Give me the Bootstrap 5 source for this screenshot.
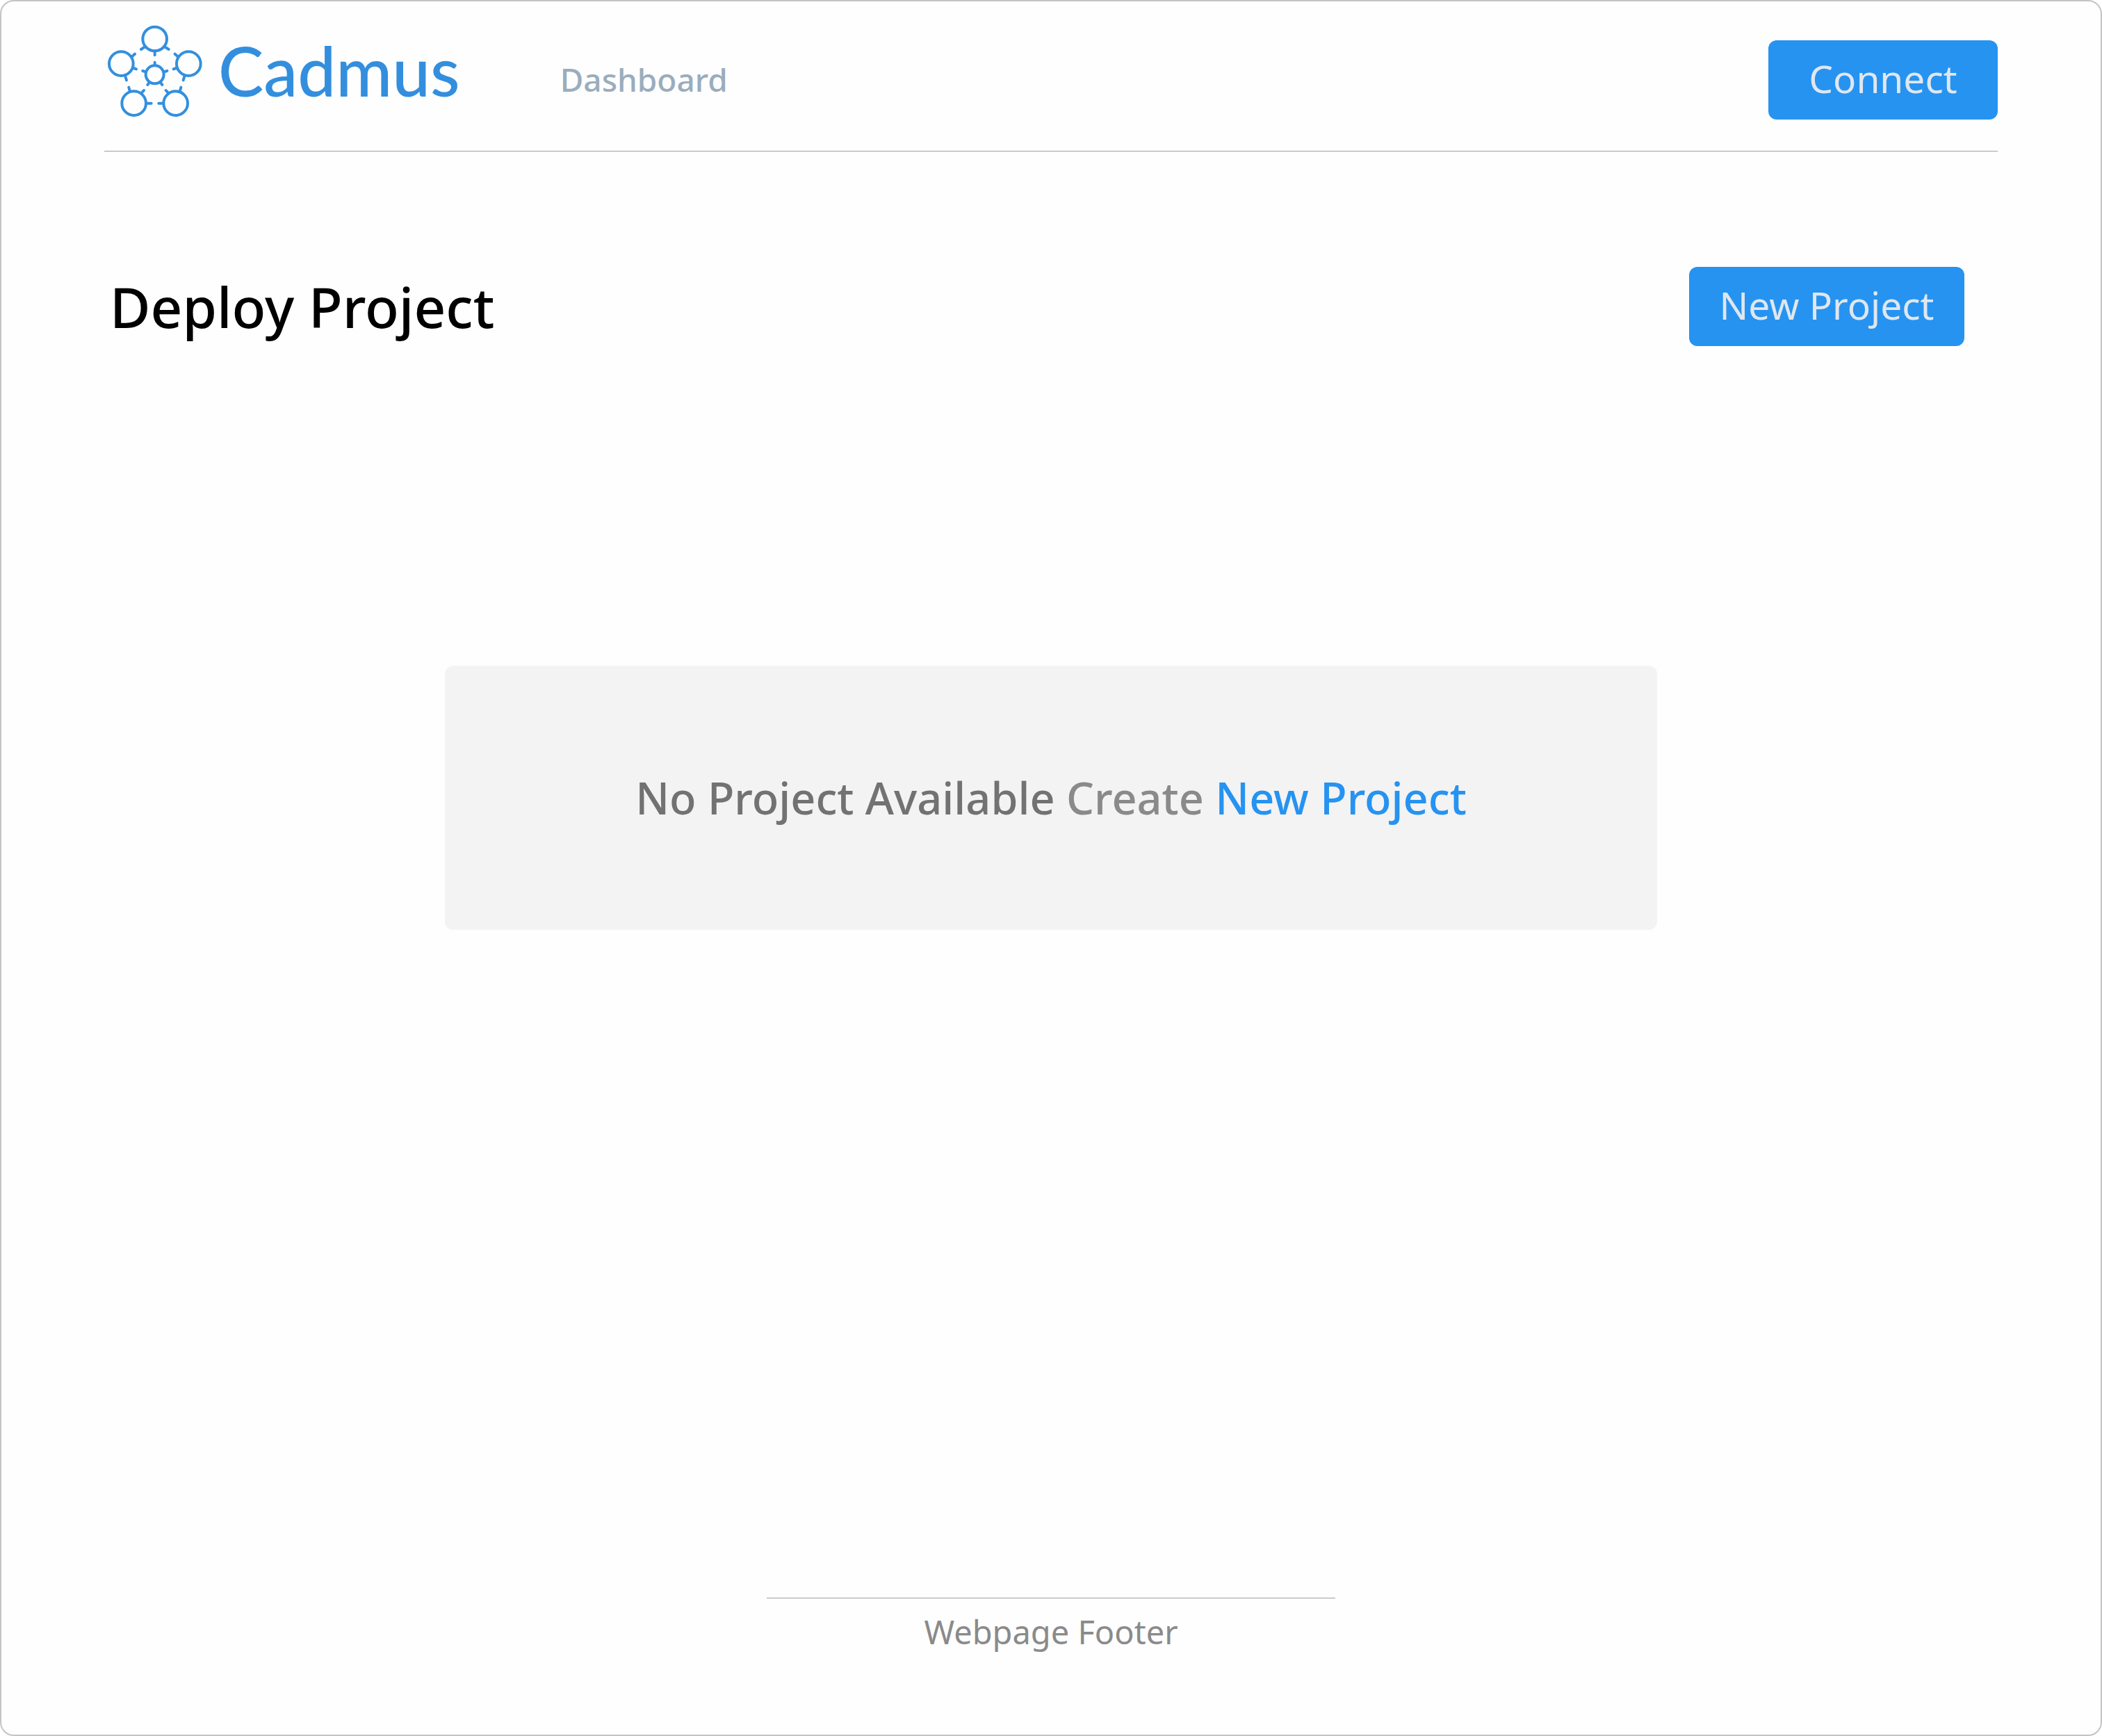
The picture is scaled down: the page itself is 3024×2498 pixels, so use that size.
<!DOCTYPE html>
<html lang="en">
<head>
<meta charset="utf-8">
<meta name="viewport" content="width=device-width, initial-scale=1">
<title>Cadmus – Deploy Project</title>
<link href="https://cdn.jsdelivr.net/npm/bootstrap@5.3.0/dist/css/bootstrap.min.css" rel="stylesheet">
<style>
  body { font-family: "Noto Sans", "Open Sans", sans-serif; background: #fff; }
  .app-frame { background: #fefefe; border: 2px solid #c4c4c4; border-radius: 20px; padding: 0 148px; }
  .app-header { height: 216px; padding: 28px 0 0; border-bottom: 1px solid #9f9f9f; }
  .brand-mark { width: 142px; height: 142px; }
  .brand-link { gap: 22px; height: 142px; color: #338fde; text-decoration: none; }
  .brand-name { font: 500 98px/112px Lato, sans-serif; }
  .main-link { font-size: 46px; line-height: 60px; font-weight: 500; color: #9aadbd; padding: 0; }
  .main-nav { margin: 54px 0 0 144px; }
  .btn-app { --bs-btn-color: #dfe7ee; --bs-btn-bg: #2693f1; --bs-btn-border-color: #2693f1;
    --bs-btn-hover-color: #fff; --bs-btn-hover-bg: #1c83dc; --bs-btn-hover-border-color: #1c83dc;
    --bs-btn-font-size: 55px; --bs-btn-line-height: 72px; --bs-btn-border-radius: 12px; --bs-btn-border-width: 0;
    height: 114px; padding: 0 0 4px; }
  .btn-connect { width: 330px; margin-top: 28px; }
  .btn-new { width: 396px; }
  .title-row { margin-top: 166px; padding: 0 48px 0 8px; }
  .title-row h1 { font-size: 80px; line-height: 112px; font-weight: 500; color: #000; }
  .empty-state { width: 64%; min-height: 380px; margin-top: 460px; border: 0; border-radius: 12px; background: #f3f3f3; }
  .empty-state p { font-size: 63px; line-height: 84px; font-weight: 500; color: #727272; }
  .empty-state span { color: #8a8a8a; }
  .empty-state a { color: #2693f1; text-decoration: none; }
  .app-footer { width: 30%; border-top: 1px solid #9f9f9f; padding: 16px 0 116px; font-size: 47px; line-height: 64px; color: #8a8a8a; }
</style>
</head>
<body>
<div class="app-frame min-vh-100 d-flex flex-column">
  <header class="app-header d-flex align-items-start">
    <a class="brand-link d-flex align-items-center" href="#">
      <svg class="brand-mark" viewBox="30 30 426 426" fill="none" stroke="#338fde" stroke-width="12" stroke-linecap="round" aria-hidden="true">
        <circle cx="248" cy="108" r="52"/><circle cx="103" cy="215" r="52"/><circle cx="394" cy="215" r="52"/>
        <circle cx="158" cy="386" r="52"/><circle cx="338" cy="386" r="52"/><circle cx="248" cy="262" r="39"/>
        <path d="M205 142L189 153M291 142L308 153M248 160V178
          M150 184L162 173M156 234L168 238M121 270L126 286
          M347 184L335 173M341 234L329 238M376 270L371 286
          M141 335L136 317M191 341L201 330M212 386H233
          M356 335L361 317M306 341L296 330M284 386H265
          M248 220V209M208 250L196 246M289 250L301 246M223 298L217 306M274 298L280 306"/>
      </svg>
      <span class="brand-name">Cadmus</span>
    </a>
    <nav class="main-nav nav" aria-label="Main">
      <a class="nav-link main-link" href="#">Dashboard</a>
    </nav>
    <button type="button" class="btn btn-app btn-connect ms-auto">Connect</button>
  </header>

  <main class="flex-grow-1 d-flex flex-column">
    <div class="title-row d-flex justify-content-between align-items-center">
      <h1 class="mb-0">Deploy Project</h1>
      <button type="button" class="btn btn-app btn-new">New Project</button>
    </div>
    <section class="card empty-state align-items-center justify-content-center mx-auto">
      <p class="mb-0 text-center">No Project Available <span>Create</span> <a href="#">New Project</a></p>
    </section>
  </main>

  <footer class="app-footer mx-auto text-center">Webpage Footer</footer>
</div>
<script src="https://cdn.jsdelivr.net/npm/bootstrap@5.3.0/dist/js/bootstrap.bundle.min.js"></script>
</body>
</html>
